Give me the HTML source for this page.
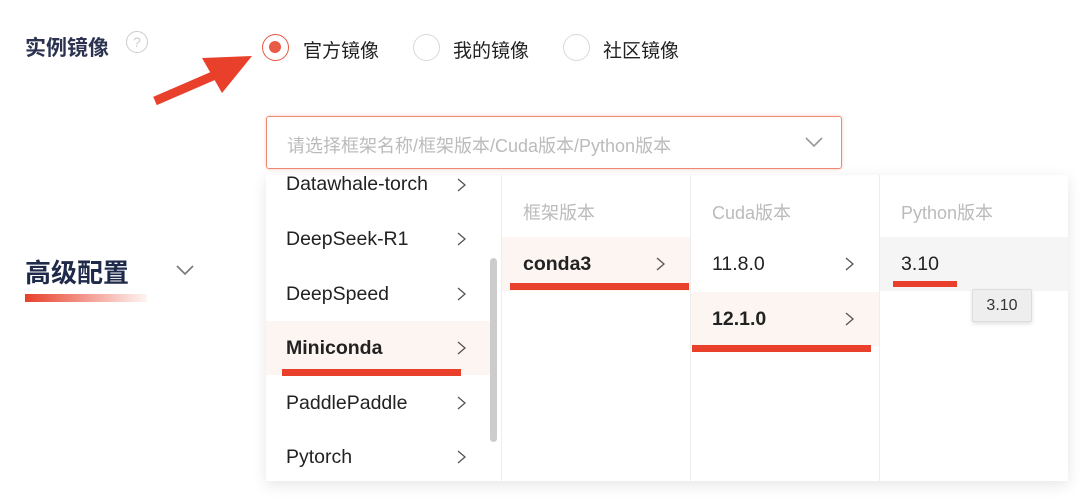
<!DOCTYPE html>
<html><head><meta charset="utf-8"><style>
*{margin:0;padding:0;box-sizing:border-box}
body{width:1080px;height:499px;background:#fff;position:relative;overflow:hidden;font-family:"Liberation Sans","Noto Sans CJK SC",sans-serif;color:#1f2333}
.a{position:absolute;white-space:nowrap}
.radio{position:absolute;width:27px;height:27px;border-radius:50%;border:1.5px solid #d9d9d9;background:#fff}
.rl{font-size:19px;color:#222}
.item{font-size:19.5px;color:#222}
.chev{position:absolute;width:10px;height:16px}
.hd{font-size:18px;color:#bbb}
.red{position:absolute;background:#e8402a}
</style></head><body>
<div class="a" style="left:25px;top:32px;font-size:21px;font-weight:bold;color:#2b3350">实例镜像</div>
<div class="a" style="left:126px;top:31px;width:22px;height:22px;border:1.3px solid #ccc;border-radius:50%;color:#ccc;font-size:14px;text-align:center;line-height:20px">?</div>

<div class="radio" style="left:262px;top:34px;border-color:#e8573f"><div style="position:absolute;left:6px;top:6px;width:12px;height:12px;border-radius:50%;background:#e85b45"></div></div>
<div class="a rl" style="left:303px;top:36px">官方镜像</div>
<div class="radio" style="left:413px;top:34px"></div>
<div class="a rl" style="left:453px;top:36px">我的镜像</div>
<div class="radio" style="left:563px;top:34px"></div>
<div class="a rl" style="left:603px;top:36px">社区镜像</div>

<svg class="a" style="left:0;top:0" width="300" height="120"><line x1="155" y1="101" x2="222" y2="72" stroke="#e8402a" stroke-width="9"/><polygon points="252,56 202,58 222,93" fill="#e8402a"/></svg>

<div class="a" style="left:266px;top:116px;width:576px;height:53px;border:1.5px solid #ef8a72;border-radius:3px;box-shadow:0 0 3px rgba(239,120,95,.4)"></div>
<div class="a" style="left:287px;top:132px;font-size:18px;color:#bbb">请选择框架名称/框架版本/Cuda版本/Python版本</div>
<svg class="a" style="left:804px;top:135px" width="20" height="14"><polyline points="2,3 10,11 18,3" fill="none" stroke="#999" stroke-width="1.6"/></svg>

<div class="a" style="left:25px;top:253px;font-size:26px;font-weight:bold;color:#1f2a4a">高级配置</div>
<div class="a" style="left:25px;top:294px;width:122px;height:8px;background:linear-gradient(90deg,#e8402a,rgba(232,64,42,.05))"></div>
<svg class="a" style="left:175px;top:263px" width="20" height="14"><polyline points="2,3 10,11 18,3" fill="none" stroke="#777" stroke-width="1.6"/></svg>

<div class="a" style="left:266px;top:175px;width:802px;height:306px;background:#fff;box-shadow:0 4px 14px rgba(0,0,0,.1)"></div>
<div class="a" style="left:501px;top:175px;width:1px;height:306px;background:#eee"></div>
<div class="a" style="left:690px;top:175px;width:1px;height:306px;background:#eee"></div>
<div class="a" style="left:879px;top:175px;width:1px;height:306px;background:#eee"></div>
<div class="a" style="left:266px;top:321px;width:225px;height:54px;background:#fcf5f2"></div>
<div class="a" style="left:490px;top:258px;width:7px;height:184px;border-radius:4px;background:#ccc"></div>
<div class="a" style="left:502px;top:237px;width:188px;height:54px;background:#fcf5f2"></div>
<div class="a" style="left:691px;top:292px;width:188px;height:54px;background:#fcf5f2"></div>
<div class="a" style="left:880px;top:237px;width:188px;height:54px;background:#f5f5f5"></div>

<div class="a item" style="left:286px;top:173px">Datawhale-torch</div>
<div class="a item" style="left:286px;top:228px">DeepSeek-R1</div>
<div class="a item" style="left:286px;top:283px">DeepSpeed</div>
<div class="a item" style="left:286px;top:337px;font-weight:bold">Miniconda</div>
<div class="a item" style="left:286px;top:392px">PaddlePaddle</div>
<div class="a item" style="left:286px;top:446px">Pytorch</div>
<svg class="chev" style="left:457px;top:177px"><polyline points="1,2 8,8 1,14" fill="none" stroke="#555" stroke-width="1.3"/></svg>
<svg class="chev" style="left:457px;top:231px"><polyline points="1,2 8,8 1,14" fill="none" stroke="#555" stroke-width="1.3"/></svg>
<svg class="chev" style="left:457px;top:286px"><polyline points="1,2 8,8 1,14" fill="none" stroke="#555" stroke-width="1.3"/></svg>
<svg class="chev" style="left:457px;top:340px"><polyline points="1,2 8,8 1,14" fill="none" stroke="#555" stroke-width="1.3"/></svg>
<svg class="chev" style="left:457px;top:395px"><polyline points="1,2 8,8 1,14" fill="none" stroke="#555" stroke-width="1.3"/></svg>
<svg class="chev" style="left:457px;top:449px"><polyline points="1,2 8,8 1,14" fill="none" stroke="#555" stroke-width="1.3"/></svg>

<div class="a hd" style="left:523px;top:199px">框架版本</div>
<div class="a hd" style="left:712px;top:199px">Cuda版本</div>
<div class="a hd" style="left:901px;top:199px">Python版本</div>
<div class="a item" style="left:523px;top:253px;font-weight:bold">conda3</div>
<svg class="chev" style="left:656px;top:256px"><polyline points="1,2 8,8 1,14" fill="none" stroke="#555" stroke-width="1.3"/></svg>
<div class="a item" style="left:712px;top:253px">11.8.0</div>
<svg class="chev" style="left:845px;top:256px"><polyline points="1,2 8,8 1,14" fill="none" stroke="#555" stroke-width="1.3"/></svg>
<div class="a item" style="left:712px;top:308px;font-weight:bold">12.1.0</div>
<svg class="chev" style="left:845px;top:311px"><polyline points="1,2 8,8 1,14" fill="none" stroke="#555" stroke-width="1.3"/></svg>
<div class="a item" style="left:901px;top:253px">3.10</div>
<div class="a" style="left:972px;top:289px;width:60px;height:33px;background:#eee;border:1px solid #ddd;border-radius:2px;box-shadow:0 2px 4px rgba(0,0,0,.12);font-size:16px;color:#333;text-align:center;line-height:31px">3.10</div>

<div class="red" style="left:282px;top:369px;width:179px;height:7px"></div>
<div class="red" style="left:510px;top:283px;width:179px;height:7px"></div>
<div class="red" style="left:692px;top:345px;width:179px;height:7px"></div>
<div class="red" style="left:893px;top:281px;width:64px;height:6px"></div>
</body></html>
